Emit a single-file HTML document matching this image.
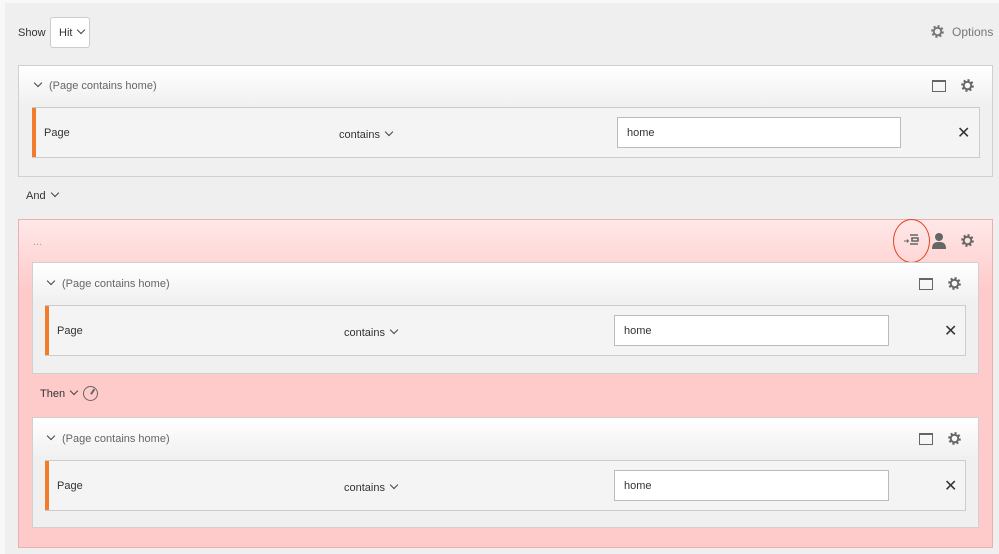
<!DOCTYPE html>
<html><head><style>
*{box-sizing:border-box;margin:0;padding:0}
body{width:999px;height:554px;background:#f8f8f8;font-family:"Liberation Sans",sans-serif;font-size:11px;color:#333;position:relative;overflow:hidden}
.a{position:absolute}
.main{left:5px;top:3px;width:994px;height:551px;background:#efefef}
.box{background:linear-gradient(#fff,#f0f0f0 40px,#f0f0f0);border:1px solid #d0d0d0}
.row{background:#f4f4f4;border:1px solid #ccc;border-left:none}
.bar{left:0;top:0;bottom:0;width:4px;background:#f07c2e}
.inp{background:#fff;border:1px solid #bbb;padding-left:9px;line-height:31px}
.t{color:#666}
.chev{display:inline-block;width:6px;height:6px;border-right:1.2px solid #444;border-bottom:1.2px solid #444;transform:rotate(45deg);margin-left:6px;position:relative;top:-3px}
.win{width:14px;height:12px;border:1.5px solid #666;border-top-width:2.5px}
</style></head><body>
<div class="a main"></div>
<div class="a" style="left:18px;top:27px">Show</div>
<div class="a" style="left:50px;top:17px;width:40px;height:31px;background:#fff;border:1px solid #ccc;border-radius:3px;padding:9px 0 0 8px">Hit<span class="chev"></span></div>
<svg class="a" style="left:930px;top:24px" width="15" height="15" viewBox="0 0 16 16"><circle cx="8" cy="8" r="5" fill="none" stroke="#777" stroke-width="3.5" stroke-dasharray="2 1.9"/><circle cx="8" cy="8" r="4" fill="none" stroke="#777" stroke-width="2"/></svg>
<div class="a" style="left:952px;top:25px;font-size:12px;color:#777">Options</div>

<div class="a box" style="left:18px;top:65px;width:975px;height:112px"></div>
<div class="a t" style="left:33px;top:80px"><span class="chev" style="margin:0 8px 0 2px"></span>(Page contains home)</div>
<div class="a win" style="left:932px;top:80px"></div>
<svg class="a" style="left:960px;top:78px" width="15" height="15" viewBox="0 0 16 16"><circle cx="8" cy="8" r="5" fill="none" stroke="#666" stroke-width="3.5" stroke-dasharray="2 1.9"/><circle cx="8" cy="8" r="4" fill="none" stroke="#666" stroke-width="2"/></svg>
<div class="a row" style="left:32px;top:107px;width:948px;height:51px"><div class="a bar"></div></div>
<div class="a" style="left:44px;top:127px">Page</div>
<div class="a" style="left:339px;top:129px">contains<span class="chev"></span></div>
<div class="a inp" style="left:617px;top:117px;width:284px;height:31px">home</div>
<div class="a" style="left:957px;top:123px;font-size:16px;color:#333">✕</div>

<div class="a" style="left:26px;top:190px">And<span class="chev"></span></div>

<div class="a" style="left:18px;top:219px;width:975px;height:329px;background:linear-gradient(#ffe8e8,#ffcaca 70px,#ffcaca);border:1px solid #e8b0b0"></div>
<div class="a" style="left:33px;top:236px;color:#b99">...</div>
<div class="a" style="left:893px;top:219px;width:37px;height:44px;border:1.5px solid #e8401c;border-radius:50%"></div>
<svg class="a" style="left:903px;top:233px" width="16" height="14" viewBox="0 0 16 14"><path d="M1 8h4M4 6.5l1.5 1.5L4 9.5" stroke="#666" fill="none"/><path d="M7 2h8M9 5h6v3H9zM7 11h8" stroke="#666" stroke-width="1.6" fill="none"/></svg>
<svg class="a" style="left:931px;top:232px" width="16" height="17" viewBox="0 0 16 17"><circle cx="8" cy="5" r="4" fill="#666"/><path d="M1 17c0-6 3-7 7-7s7 1 7 7z" fill="#666"/></svg>
<svg class="a" style="left:960px;top:233px" width="15" height="15" viewBox="0 0 16 16"><circle cx="8" cy="8" r="5" fill="none" stroke="#666" stroke-width="3.5" stroke-dasharray="2 1.9"/><circle cx="8" cy="8" r="4" fill="none" stroke="#666" stroke-width="2"/></svg>

<div class="a box" style="left:32px;top:262px;width:947px;height:112px"></div>
<div class="a t" style="left:46px;top:278px"><span class="chev" style="margin:0 8px 0 2px"></span>(Page contains home)</div>
<div class="a win" style="left:919px;top:278px"></div>
<svg class="a" style="left:947px;top:276px" width="15" height="15" viewBox="0 0 16 16"><circle cx="8" cy="8" r="5" fill="none" stroke="#666" stroke-width="3.5" stroke-dasharray="2 1.9"/><circle cx="8" cy="8" r="4" fill="none" stroke="#666" stroke-width="2"/></svg>
<div class="a row" style="left:45px;top:305px;width:921px;height:51px"><div class="a bar"></div></div>
<div class="a" style="left:57px;top:325px">Page</div>
<div class="a" style="left:344px;top:327px">contains<span class="chev"></span></div>
<div class="a inp" style="left:614px;top:315px;width:275px;height:31px">home</div>
<div class="a" style="left:944px;top:321px;font-size:16px">✕</div>

<div class="a" style="left:40px;top:388px">Then<span class="chev"></span></div>
<div class="a" style="left:83px;top:386px;width:15px;height:15px;border:1.5px solid #666;border-radius:50%"></div>
<div class="a" style="left:90px;top:388px;width:1.5px;height:6px;background:#666;transform:rotate(35deg);transform-origin:bottom"></div>

<div class="a box" style="left:32px;top:417px;width:947px;height:111px"></div>
<div class="a t" style="left:46px;top:433px"><span class="chev" style="margin:0 8px 0 2px"></span>(Page contains home)</div>
<div class="a win" style="left:919px;top:433px"></div>
<svg class="a" style="left:947px;top:431px" width="15" height="15" viewBox="0 0 16 16"><circle cx="8" cy="8" r="5" fill="none" stroke="#666" stroke-width="3.5" stroke-dasharray="2 1.9"/><circle cx="8" cy="8" r="4" fill="none" stroke="#666" stroke-width="2"/></svg>
<div class="a row" style="left:45px;top:460px;width:921px;height:51px"><div class="a bar"></div></div>
<div class="a" style="left:57px;top:480px">Page</div>
<div class="a" style="left:344px;top:482px">contains<span class="chev"></span></div>
<div class="a inp" style="left:614px;top:470px;width:275px;height:31px">home</div>
<div class="a" style="left:944px;top:476px;font-size:16px">✕</div>
</body></html>
